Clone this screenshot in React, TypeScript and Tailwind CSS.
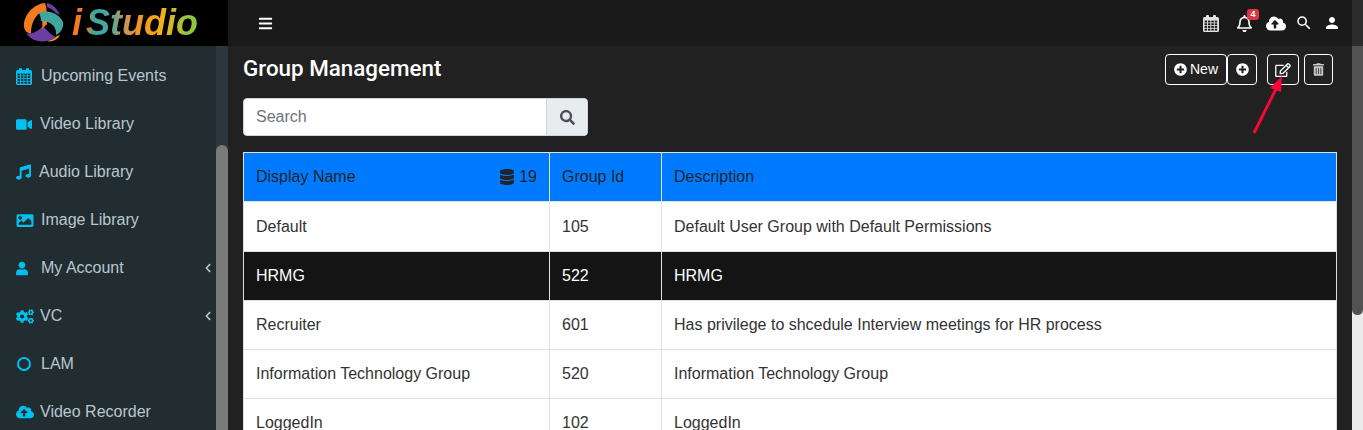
import type { ReactNode } from "react";
import {
    FaBars,
    FaChevronLeft,
    FaCloudUploadAlt,
    FaCogs,
    FaDatabase,
    FaImage,
    FaMusic,
    FaPlusCircle,
    FaRegBell,
    FaRegEdit,
    FaSearch,
    FaTrashAlt,
    FaUser,
    FaVideo,
} from "react-icons/fa";
import { MdPerson, MdSearch } from "react-icons/md";

// grid calendar, the package's one has too few cells
function CalendarIcon({ cell, className }: { cell: string; className: string }) {
    const cells = [];
    for (let r = 0; r < 4; r++) {
        for (let c = 0; c < 4; c++) {
            cells.push(<rect key={`${r}-${c}`} x={1.5 + c * 3.4} y={5.6 + r * 2.7} width="2.5" height="1.9" fill={cell} />);
        }
    }
    return (
        <svg viewBox="0 0 16 17" className={className}>
            <rect x="0" y="2" width="16" height="15" rx="1.5" fill="currentColor" />
            <rect x="3" y="0" width="3" height="4.5" rx="1" fill="currentColor" />
            <rect x="10" y="0" width="3" height="4.5" rx="1" fill="currentColor" />
            {cells}
        </svg>
    );
}

const menu: { label: string; icon: ReactNode; gap: string; arrow?: boolean }[] = [
    { label: "Upcoming Events", gap: "w-[25px]", icon: <CalendarIcon cell="#222d32" className="w-[16px] h-[17px]" /> },
    { label: "Video Library", gap: "w-[24px]", icon: <FaVideo className="w-[16px] h-[15px]" /> },
    { label: "Audio Library", gap: "w-[23px]", icon: <FaMusic className="w-[15px] h-[16px]" /> },
    {
        label: "Image Library",
        gap: "w-[25px]",
        icon: <FaImage className="w-[18px] h-[17px]" />,
    },
    { label: "My Account", gap: "w-[25px]", icon: <FaUser className="w-[12px] h-[15px]" />, arrow: true },
    { label: "VC", gap: "w-[24px]", icon: <FaCogs className="w-[18px] h-[15px]" />, arrow: true },
    {
        label: "LAM",
        gap: "w-[25px]",
        icon: <span className="block w-[14px] h-[14px] ml-[1px] rounded-full border-[2.5px] border-[#00c0ef]" />,
    },
    { label: "Video Recorder", gap: "w-[24px]", icon: <FaCloudUploadAlt className="w-[18px] h-[16px]" /> },
];

const rows = [
    { name: "Default", id: "105", desc: "Default User Group with Default Permissions", h: "h-[50px]" },
    { name: "HRMG", id: "522", desc: "HRMG", selected: true, h: "h-[49px]" },
    { name: "Recruiter", id: "601", desc: "Has privilege to shcedule Interview meetings for HR process", h: "h-[49px]" },
    { name: "Information Technology Group", id: "520", desc: "Information Technology Group", h: "h-[49px]" },
    { name: "LoggedIn", id: "102", desc: "LoggedIn", h: "h-[49px]" },
];

function Logo() {
    return (
        <div className="h-[46px] bg-black flex items-center pl-[23px] shrink-0">
            <svg width="42" height="43" viewBox="0 0 42 43" className="shrink-0">
                <path d="M24 1 C30 2 34 7 37 13 L33 11 C30 8 27 6 24 5Z" fill="#6b3fa0" />
                <path d="M24 39 C28 38 32 36 34 34 L37 33 C36 36 30 41 24 39Z" fill="#f0902a" />
                <path d="M3 31 C9 33 15 29 20 24 C24 28 28 33 33 35 C26 41 10 42 3 31Z" fill="#6b3fa0" />
                <path d="M22 1 C10 2 0 14 1 25 C2 30 6 32 8 31 C8 22 12 14 17 11 C19 16 20 22 19 27 L24 22 C24 14 24 6 22 1Z" fill="#f47a20" />
                <path d="M16 11 C24 7 36 11 40 20 C41 25 38 31 33 33 C34 25 28 19 18 19 C18 16 17 13 16 11Z" fill="#3fa79d" />
            </svg>
            <span className="ml-[7px] text-[36px] leading-[40px] font-bold italic whitespace-nowrap [word-spacing:-6px] text-transparent bg-clip-text [background-image:linear-gradient(90deg,#f47a20_0%,#f47a20_12%,#35a9a5_17%,#4aa89a_30%,#c8955a_43%,#f7941d_55%,#f7b01d_72%,#8fc740_92%)]">
                i Studio
            </span>
        </div>
    );
}

function Sidebar() {
    return (
        <aside className="w-[228px] shrink-0 flex flex-col bg-[#222d32]">
            <Logo />
            <div className="flex flex-1 min-h-0">
                <nav className="flex-1 pt-[6px]">
                    {menu.map((m) => (
                        <div key={m.label} className="h-[48px] flex items-center pl-[16px] pr-[4px] text-[16px] text-[#b8c7ce]">
                            <span className={`${m.gap} shrink-0 flex items-center text-[#00c0ef]`}>{m.icon}</span>
                            <span className="flex-1">{m.label}</span>
                            {m.arrow && <FaChevronLeft className="w-[8px] h-[10px] text-[#b8c7ce]" />}
                        </div>
                    ))}
                </nav>
                <div className="w-[12px] bg-[#2b373d] pt-[99px]">
                    <div className="h-[285px] rounded-t-[6px] bg-[#7a7a7a]" />
                </div>
            </div>
        </aside>
    );
}

function TopBar() {
    return (
        <header className="h-[46px] bg-[#1a1a1a] flex items-center pl-[30px] pr-[11px] shrink-0">
            <FaBars className="w-[15px] h-[15px] text-white" />
            <div className="ml-auto flex items-center text-white">
                <CalendarIcon cell="#1a1a1a" className="w-[16px] h-[17px] text-[#e4e4e4]" />
                <span className="relative ml-[17px]">
                    <FaRegBell className="w-[17px] h-[17px] block" />
                    <span className="absolute -top-[6px] left-[11px] w-[12px] h-[11px] rounded-[3px] bg-[#dc3545] text-white text-[9px] leading-[11px] font-bold text-center">
                        4
                    </span>
                </span>
                <FaCloudUploadAlt className="ml-[13px] w-[20px] h-[17px]" />
                <MdSearch className="ml-[9px] w-[18px] h-[18px]" />
                <MdPerson className="ml-[10px] w-[18px] h-[18px]" />
            </div>
        </header>
    );
}

const actionBtn = "h-[31px] flex items-center justify-center rounded-[4px] border border-white text-white bg-[#212121]";

function Content() {
    return (
        <main className="flex-1 min-h-0 bg-[#212121] px-[15px] overflow-hidden">
            <div className="flex items-start pt-[8px]">
                <h1 className="text-[22.4px] leading-[28px] font-medium text-white font-['Roboto',sans-serif]">Group Management</h1>
                <div className="ml-auto mr-[4px] flex items-center">
                    <button className={`${actionBtn} w-[62px] text-[14px] font-medium`}>
                        <FaPlusCircle className="w-[13px] h-[13px] mr-[3px]" />
                        New
                    </button>
                    <button className={`${actionBtn} w-[30px]`}>
                        <FaPlusCircle className="w-[13px] h-[13px]" />
                    </button>
                    <button className={`${actionBtn} w-[32px] ml-[10px]`}>
                        <FaRegEdit className="w-[16px] h-[14px]" />
                    </button>
                    <button className={`${actionBtn} w-[29px] ml-[5px]`}>
                        <FaTrashAlt className="w-[11px] h-[13px] text-[#c8c8c8]" />
                    </button>
                </div>
            </div>
            <div className="flex w-[345px] h-[38px] mt-[13px] rounded-[4px] overflow-hidden border border-[#ced4da] bg-white">
                <div className="flex-1 flex items-center pl-[12px] text-[16px] text-[#6c757d]">Search</div>
                <div className="w-[41px] flex items-center justify-center bg-[#e9ecef] border-l border-[#ced4da]">
                    <FaSearch className="w-[15px] h-[15px] text-[#495057]" />
                </div>
            </div>
            <table className="mt-[16px] w-[1094px] table-fixed border-collapse text-[16px] bg-white text-[#333]">
                <colgroup>
                    <col className="w-[306px]" />
                    <col className="w-[112px]" />
                    <col />
                </colgroup>
                <thead>
                    <tr className="h-[49px] bg-[#007bff] text-[#212529]">
                        <th className="border border-[#dee2e6] px-[12px] text-left font-normal">
                            <div className="flex items-center justify-between">
                                Display Name
                                <span className="flex items-center">
                                    <FaDatabase className="w-[14px] h-[16px] mr-[5px]" />
                                    19
                                </span>
                            </div>
                        </th>
                        <th className="border border-[#dee2e6] px-[12px] text-left font-normal">Group Id</th>
                        <th className="border border-[#dee2e6] px-[12px] text-left font-normal">Description</th>
                    </tr>
                </thead>
                <tbody>
                    {rows.map((r) => (
                        <tr key={r.id} className={r.selected ? `${r.h} bg-[#141414] text-white` : `${r.h} text-[#333]`}>
                            <td className="border border-[#dee2e6] px-[12px]">{r.name}</td>
                            <td className="border border-[#dee2e6] px-[12px]">{r.id}</td>
                            <td className="border border-[#dee2e6] px-[12px]">{r.desc}</td>
                        </tr>
                    ))}
                </tbody>
            </table>
        </main>
    );
}

export default function App() {
    return (
        <div className="relative h-[430px] w-[1363px] flex overflow-hidden font-['Liberation_Sans',sans-serif]">
            <Sidebar />
            <div className="flex-1 min-w-0 flex flex-col">
                <TopBar />
                <Content />
            </div>
            {/* page scrollbar */}
            <div className="w-[11px] shrink-0 flex flex-col bg-[#ececec]">
                <div className="h-[46px] bg-[#2b2b2b]" />
                <div className="h-[269px] rounded-b-[6px] bg-[#525252]" />
            </div>
            {/* red annotation arrow */}
            <svg className="absolute left-[1250px] top-[72px]" width="40" height="64" viewBox="0 0 40 64">
                <path d="M4 61 L27 15" stroke="#f8063a" strokeWidth="3" />
                <path d="M32 4 L20 16 L31 20Z" fill="#f8063a" />
            </svg>
        </div>
    );
}
